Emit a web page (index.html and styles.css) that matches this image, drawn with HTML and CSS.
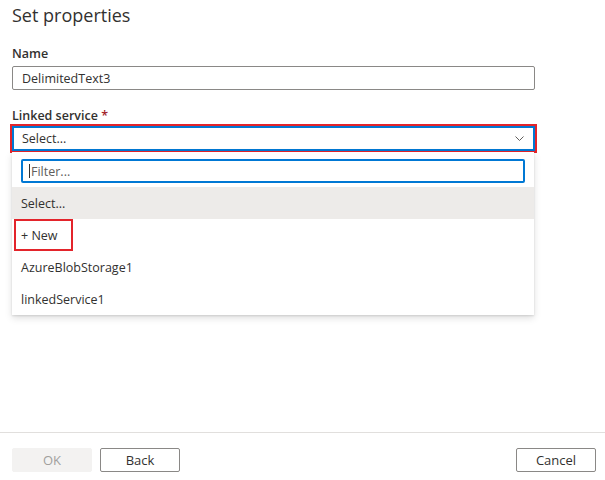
FILE: index.html
```html
<!DOCTYPE html>
<html lang="en">
<head>
<meta charset="utf-8">
<title>Set properties</title>
<link rel="stylesheet" href="styles.css">
</head>
<body>
<div class="page">
  <main class="content">
    <h1 class="title">Set properties</h1>
    <div class="field">
      <label class="label">Name</label>
      <div class="input">DelimitedText3</div>
    </div>
    <div class="field field-linked">
      <label class="label">Linked service <span class="req">*</span></label>
      <div class="combo">
        <div class="select">
          <span class="select-text">Select...</span>
          <svg class="chevron" width="10" height="6" viewBox="0 0 10 6"><polyline points="0.5,0.5 4.5,4.5 8.5,0.5" fill="none" stroke="#605e5c" stroke-width="1"/></svg>
        </div>
        <div class="menu">
          <div class="filter"><span class="caret"></span><span class="placeholder">Filter...</span></div>
          <div class="item item-selected">Select...</div>
          <div class="item item-new"><span class="new-box">+ New</span></div>
          <div class="item">AzureBlobStorage1</div>
          <div class="item">linkedService1</div>
        </div>
      </div>
    </div>
  </main>
  <footer class="footer">
    <div class="footer-left">
      <button class="btn btn-disabled">OK</button>
      <button class="btn">Back</button>
    </div>
    <button class="btn">Cancel</button>
  </footer>
</div>
</body>
</html>
```

FILE: styles.css
```css
html, body {
  margin: 0;
  padding: 0;
  background: #ffffff;
}
body {
  font-family: "Open Sans", "Noto Sans", sans-serif;
  color: #323130;
  font-size: 13px;
}
.page {
  width: 605px;
  height: 480px;
  display: flex;
  flex-direction: column;
}
.content {
  flex: 1;
  padding: 3px 70px 0 12px;
}
.title {
  margin: 0;
  font-size: 18px;
  line-height: 24px;
  font-weight: 400;
  color: #323130;
}
.field {
  display: flex;
  flex-direction: column;
  margin-top: 19px;
}
.field-linked {
  margin-top: 18px;
}
.label {
  font-size: 12.5px;
  line-height: 16px;
  font-weight: 600;
  color: #323130;
}
.req {
  color: #a4262c;
}
.input {
  margin-top: 4px;
  box-sizing: border-box;
  height: 24px;
  border: 1px solid #8a8886;
  border-radius: 2px;
  padding: 0 9px;
  display: flex;
  align-items: center;
  font-size: 12.5px;
}
.combo {
  position: relative;
  margin-top: 2px;
}
.select {
  box-sizing: border-box;
  height: 25px;
  border: 2px solid #0078d4;
  box-shadow: 0 0 0 2px #e3242b;
  display: flex;
  align-items: center;
  justify-content: space-between;
  padding: 0 8px 0 8px;
  font-size: 12.5px;
}
.chevron {
  display: block;
}
.menu {
  position: absolute;
  top: calc(100% + 1px);
  left: 0;
  right: 1px;
  background: #ffffff;
  box-shadow: 0 3.2px 7.2px rgba(0, 0, 0, 0.132), 0 0.6px 1.8px rgba(0, 0, 0, 0.108);
  padding-top: 7px;
  display: flex;
  flex-direction: column;
}
.filter {
  box-sizing: border-box;
  margin: 0 9px 4px 9px;
  height: 24px;
  border: 2px solid #0078d4;
  border-radius: 2px;
  display: flex;
  align-items: center;
  padding-left: 6px;
  font-size: 12.5px;
}
.caret {
  width: 1px;
  height: 14px;
  background: #323130;
  margin-right: 1px;
}
.placeholder {
  color: #605e5c;
}
.item {
  height: 32px;
  box-sizing: border-box;
  display: flex;
  align-items: center;
  padding-left: 9px;
  font-size: 12.5px;
  color: #323130;
}
.item-selected {
  background: #edebe9;
}
.item-new {
  padding-left: 2px;
}
.new-box {
  box-sizing: border-box;
  height: 32px;
  width: 59px;
  border: 2px solid #e3242b;
  display: flex;
  align-items: center;
  padding-left: 5px;
}
.footer {
  border-top: 1px solid #e1dfdd;
  height: 48px;
  box-sizing: border-box;
  padding: 15px 9px 0 12px;
  display: flex;
  justify-content: space-between;
  align-items: flex-start;
}
.footer-left {
  display: flex;
  gap: 8px;
}
.btn {
  box-sizing: border-box;
  height: 24px;
  width: 80px;
  border: 1px solid #8a8886;
  border-radius: 2px;
  background: #ffffff;
  font-family: "Open Sans", "Noto Sans", sans-serif;
  font-size: 13px;
  color: #323130;
  padding: 0;
}
.btn-disabled {
  background: #f3f2f1;
  border-color: #f3f2f1;
  color: #a19f9d;
}
```
